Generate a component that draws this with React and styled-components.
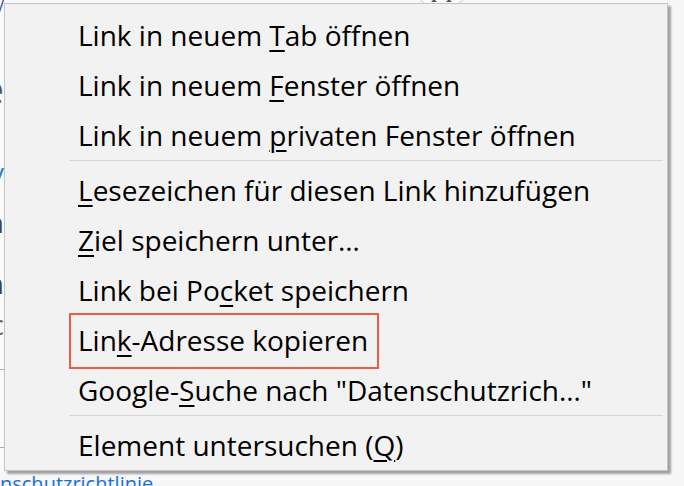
import React from "react";
import styled, { createGlobalStyle } from "styled-components";

const Global = createGlobalStyle`
  html, body { margin: 0; padding: 0; background: #f7f7f7; }
  body { font-family: "Open Sans", "Noto Sans", sans-serif; }
`;

const Page = styled.div`
  position: relative;
  width: 684px;
  height: 486px;
  overflow: hidden;
  background: #f7f7f7;
  display: flex;
  flex-direction: column;
`;

const TopStrip = styled.div`
  height: 0;
  flex-shrink: 0;
  display: flex;
`;

const Knob = styled.div`
  margin-left: 420px;
  margin-top: -10px;
  width: 43px;
  height: 14px;
  background: #fff;
  border: 1px solid #c8c8c8;
  border-radius: 6px;
  display: flex;
  justify-content: center;
  align-items: flex-end;
  gap: 9px;
  padding-bottom: 1px;
  box-sizing: border-box;
`;

const Tri = styled.span`
  width: 0;
  height: 0;
  border-left: 3px solid transparent;
  border-right: 3px solid transparent;
  border-bottom: 3px solid #555;
`;

const LeftEdge = styled.div`
  width: 4px;
  height: 472px;
  flex-shrink: 0;
  display: flex;
  flex-direction: column;
  overflow: hidden;
  background: #fafafa;
`;

const Frag = styled.div`
  height: ${(p) => p.$h}px;
  flex-shrink: 0;
  display: flex;
  justify-content: flex-end;
  align-items: center;
  white-space: nowrap;
  font-family: "Open Sans", sans-serif;
  font-size: ${(p) => p.$size}px;
  line-height: 1;
  color: ${(p) => p.$color};
`;

const Rule = styled.div`
  height: 1px;
  flex-shrink: 0;
  background: #a8a8a8;
  margin-bottom: ${(p) => p.$mb}px;
`;

const BottomLink = styled.div`
  flex-shrink: 0;
  margin-left: -44px;
  margin-top: 0;
  font-family: "Open Sans", sans-serif;
  font-size: 20px;
  line-height: 24px;
  color: #1a6fd0;
  white-space: nowrap;
`;

const Menu = styled.div`
  position: absolute;
  left: 4px;
  top: 3px;
  width: 664px;
  box-sizing: border-box;
  background: #f2f2f2;
  border: 1px solid #c4c4c4;
  box-shadow: 3px 3px 2px rgba(0, 0, 0, 0.35);
  padding: 6px 0 0;
  font-family: "Open Sans", "Noto Sans", sans-serif;
  font-size: 28px;
  color: #000;
`;

const Item = styled.div`
  height: 50px;
  line-height: 50px;
  padding-left: 73px;
  white-space: nowrap;
`;

const Label = styled.span`
  display: inline-block;
  position: relative;
  height: 50px;
  ${(p) =>
    p.$marked &&
    `
    &::after {
      content: "";
      position: absolute;
      left: -9px;
      right: -11px;
      top: -2px;
      bottom: -4px;
      border: 2px solid #ef5a44;
      pointer-events: none;
    }
  `}
`;

const Key = styled.u`
  text-decoration-thickness: 2px;
  text-underline-offset: 4px;
`;

const Separator = styled.div`
  height: 1px;
  background: #d7d7d7;
  margin: 0 4px 4px 64px;
`;

export default function App() {
  return (
    <>
      <Global />
      <Page>
        <TopStrip>
          <Knob>
            <Tri />
            <Tri />
          </Knob>
        </TopStrip>
        <LeftEdge>
          <Frag $h={12} $size={16} $color="#2a4fa8">V</Frag>
          <Frag $h={60} $size={10} $color="#fafafa"> </Frag>
          <Frag $h={34} $size={40} $color="#555">Die</Frag>
          <Frag $h={56} $size={10} $color="#fafafa"> </Frag>
          <Frag $h={20} $size={26} $color="#2a7bd4">Nav</Frag>
          <Frag $h={26} $size={10} $color="#fafafa"> </Frag>
          <Frag $h={28} $size={28} $color="#444">ein</Frag>
          <Frag $h={36} $size={10} $color="#fafafa"> </Frag>
          <Frag $h={22} $size={28} $color="#444">im</Frag>
          <Frag $h={18} $size={10} $color="#fafafa"> </Frag>
          <Frag $h={24} $size={28} $color="#666">ac</Frag>
          <Frag $h={33} $size={10} $color="#fafafa"> </Frag>
          <Rule $mb={77} />
          <Rule $mb={0} />
        </LeftEdge>
        <BottomLink>Datenschutzrichtlinie</BottomLink>
        <Menu>
          <Item>
            <Label>Link in neuem <Key>T</Key>ab öffnen</Label>
          </Item>
          <Item>
            <Label>Link in neuem <Key>F</Key>enster öffnen</Label>
          </Item>
          <Item>
            <Label>Link in neuem <Key>p</Key>rivaten Fenster öffnen</Label>
          </Item>
          <Separator />
          <Item>
            <Label><Key>L</Key>esezeichen für diesen Link hinzufügen</Label>
          </Item>
          <Item>
            <Label><Key>Z</Key>iel speichern unter…</Label>
          </Item>
          <Item>
            <Label>Link bei Po<Key>c</Key>ket speichern</Label>
          </Item>
          <Item>
            <Label $marked>Lin<Key>k</Key>-Adresse kopieren</Label>
          </Item>
          <Item>
            <Label>Google-<Key>S</Key>uche nach "Datenschutzrich…"</Label>
          </Item>
          <Separator />
          <Item>
            <Label>Element untersuchen (<Key>Q</Key>)</Label>
          </Item>
        </Menu>
      </Page>
    </>
  );
}
